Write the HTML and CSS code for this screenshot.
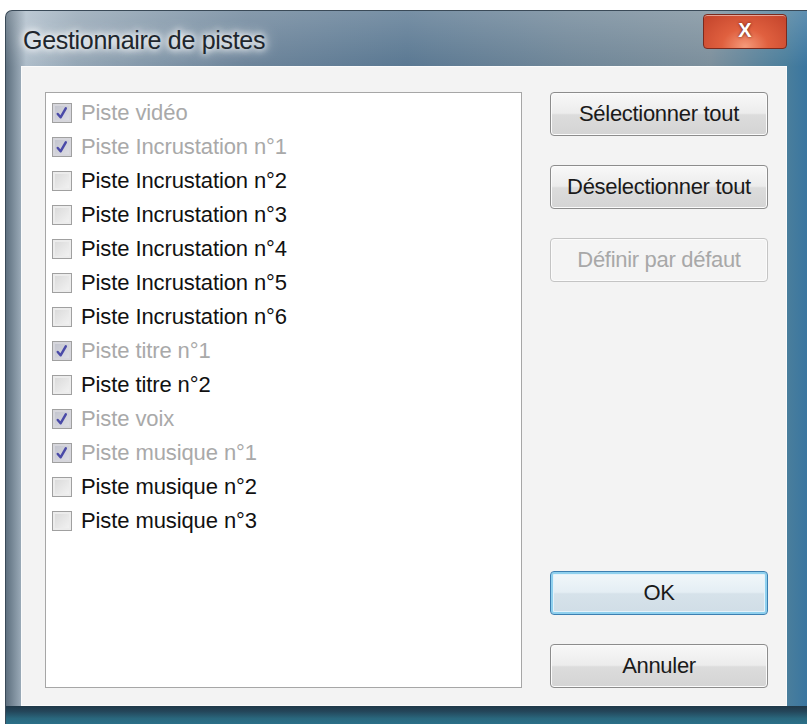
FILE: index.html
```html
<!DOCTYPE html>
<html lang="fr">
<head>
<meta charset="utf-8">
<title>Gestionnaire de pistes</title>
<link rel="stylesheet" href="styles.css">
</head>
<body>
<div class="window">
  <div class="titlebar">
    <span class="title">Gestionnaire de pistes</span>
    <span class="close">X</span>
  </div>
  <div class="client">
    <div class="list">
      <div class="item checked"><span class="box"><svg viewBox="0 0 19 19"><path d="M5 10.5 L8 14 L13.5 4.5"/></svg></span><span class="label">Piste vidéo</span></div>
      <div class="item checked"><span class="box"><svg viewBox="0 0 19 19"><path d="M5 10.5 L8 14 L13.5 4.5"/></svg></span><span class="label">Piste Incrustation n°1</span></div>
      <div class="item"><span class="box"></span><span class="label">Piste Incrustation n°2</span></div>
      <div class="item"><span class="box"></span><span class="label">Piste Incrustation n°3</span></div>
      <div class="item"><span class="box"></span><span class="label">Piste Incrustation n°4</span></div>
      <div class="item"><span class="box"></span><span class="label">Piste Incrustation n°5</span></div>
      <div class="item"><span class="box"></span><span class="label">Piste Incrustation n°6</span></div>
      <div class="item checked"><span class="box"><svg viewBox="0 0 19 19"><path d="M5 10.5 L8 14 L13.5 4.5"/></svg></span><span class="label">Piste titre n°1</span></div>
      <div class="item"><span class="box"></span><span class="label">Piste titre n°2</span></div>
      <div class="item checked"><span class="box"><svg viewBox="0 0 19 19"><path d="M5 10.5 L8 14 L13.5 4.5"/></svg></span><span class="label">Piste voix</span></div>
      <div class="item checked"><span class="box"><svg viewBox="0 0 19 19"><path d="M5 10.5 L8 14 L13.5 4.5"/></svg></span><span class="label">Piste musique n°1</span></div>
      <div class="item"><span class="box"></span><span class="label">Piste musique n°2</span></div>
      <div class="item"><span class="box"></span><span class="label">Piste musique n°3</span></div>
    </div>
    <div class="buttons">
      <div class="group">
        <button class="btn">Sélectionner tout</button>
        <button class="btn">Déselectionner tout</button>
        <button class="btn disabled">Définir par défaut</button>
      </div>
      <div class="group">
        <button class="btn default">OK</button>
        <button class="btn">Annuler</button>
      </div>
    </div>
  </div>
</div>
</body>
</html>
```
FILE: styles.css
```css
html, body {
  margin: 0;
  padding: 0;
  background: #ffffff;
}
body {
  font-family: "Liberation Sans", Arial, sans-serif;
  width: 807px;
  height: 724px;
  overflow: hidden;
}
.window {
  box-sizing: border-box;
  margin: 10px 0 0 5px;
  width: 802px;
  height: 714px;
  padding: 0 20px 18px 15px;
  display: flex;
  flex-direction: column;
  border: 1px solid #3a4a58;
  border-bottom: none;
  border-right: none;
  border-radius: 7px 0 0 0;
  background:
    linear-gradient(180deg, #1f3848 0%, #24465a 30%, #2a687e 70%, #2b7088 100%) left bottom / 100% 18px no-repeat,
    linear-gradient(180deg, rgba(255,255,255,0.18) 0px, rgba(255,255,255,0) 56px),
    linear-gradient(90deg, #5d6f7e 0%, #aebdca 2.5%, #94a6b5 9%, #6c849a 30%, #5a7892 50%, #6f8698 70%, #7c8f9c 88%, #4a7e9c 97.5%, #3a76a0 100%);
}
.titlebar {
  height: 55px;
  display: flex;
  justify-content: space-between;
  align-items: flex-start;
  padding: 0 0 0 2px;
}
.title {
  margin-top: 15px;
  font-size: 25px;
  color: #20262d;
  text-shadow: 0 0 6px #ffffff, 0 0 10px #ffffff, 0 0 16px rgba(255,255,255,0.9);
  letter-spacing: -0.3px;
}
.close {
  margin-top: 3px;
  width: 84px;
  height: 35px;
  box-sizing: border-box;
  border: 1px solid #7a2a1e;
  border-radius: 4px;
  background: radial-gradient(ellipse at 50% 95%, #f59a7a 0%, #e0603f 40%, #c2432b 100%);
  box-shadow: inset 0 1px 0 rgba(255,255,255,0.5);
  color: #ffffff;
  font-weight: bold;
  font-size: 20px;
  text-align: center;
  line-height: 31px;
  text-shadow: 0 0 3px #5a1a10;
}
.client {
  flex: 1;
  display: flex;
  gap: 28px;
  padding: 25px 18px 17px 23px;
  background: #f3f3f3;
  border: 1px solid #fbfbfb;
}
.list {
  width: 478px;
  box-sizing: border-box;
  background: #ffffff;
  border: 1px solid #a6a6a6;
  padding: 3px 0 0 6px;
}
.item {
  height: 34px;
  display: flex;
  align-items: center;
  gap: 9px;
}
.box {
  width: 20px;
  height: 20px;
  box-sizing: border-box;
  border: 1px solid #a0a0a0;
  background: linear-gradient(135deg, #d8d8d8, #f4f4f4);
  box-shadow: inset 0 0 0 2px #ececec;
}
.checked .box {
  background: linear-gradient(135deg, #c0c2cc, #e0e0e6);
  box-shadow: inset 0 0 0 2px #d6d6dc;
}
.box svg {
  display: block;
  width: 18px;
  height: 18px;
}
.box path {
  fill: none;
  stroke: #4a4aa8;
  stroke-width: 2.6;
  stroke-linecap: round;
  stroke-linejoin: round;
}
.label {
  font-size: 22px;
  color: #111111;
  letter-spacing: -0.1px;
}
.checked .label {
  color: #a9a9a9;
}
.buttons {
  width: 218px;
  display: flex;
  flex-direction: column;
  justify-content: space-between;
}
.group {
  display: flex;
  flex-direction: column;
  gap: 29px;
}
.btn {
  width: 218px;
  height: 44px;
  box-sizing: border-box;
  border: 1px solid #8c8c8c;
  border-radius: 4px;
  background: linear-gradient(180deg, #f8f8f8 0%, #ececec 48%, #dcdcdc 52%, #d4d4d4 100%);
  box-shadow: inset 0 0 0 1px #fbfbfb;
  font-family: "Liberation Sans", Arial, sans-serif;
  font-size: 22px;
  color: #1a1a1a;
  letter-spacing: -0.3px;
  padding: 0;
}
.btn.disabled {
  border-color: #c4c4c4;
  background: #f4f4f4;
  color: #a8a8a8;
}
.btn.default {
  border: 1px solid #3c7fb1;
  box-shadow: inset 0 0 0 2px #8fd0ee, inset 0 0 0 3px #e4f2fa;
  background: linear-gradient(180deg, #f2f7fa 0%, #e4eef4 48%, #d6e2ea 52%, #d0dde6 100%);
}
```
